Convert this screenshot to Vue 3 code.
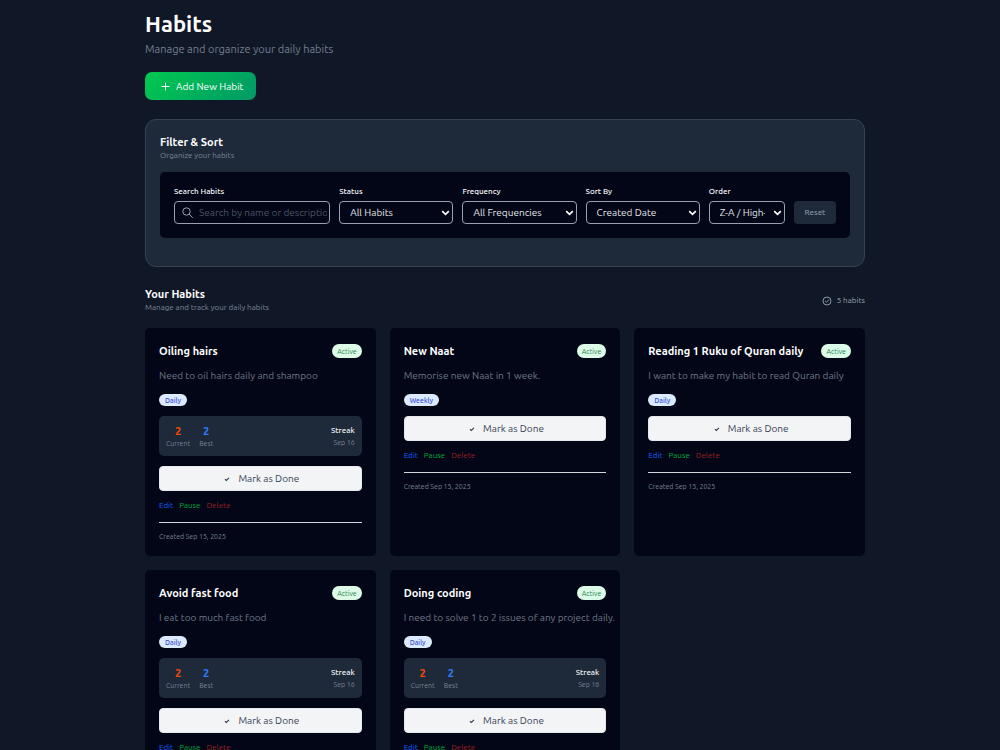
<script setup>
import { ref, computed } from 'vue'

const search = ref('')
const status = ref('All Habits')
const frequency = ref('All Frequencies')
const sortBy = ref('Created Date')
const order = ref('Z-A / High-Low')

const habits = ref([
  { id: 1, name: 'Oiling hairs', text: 'Need to oil hairs daily and shampoo', frequency: 'Daily', current: 2, best: 2, last: 'Sep 16' },
  { id: 2, name: 'New Naat', text: 'Memorise new Naat in 1 week.', frequency: 'Weekly' },
  { id: 3, name: 'Reading 1 Ruku of Quran daily', text: 'I want to make my habit to read Quran daily', frequency: 'Daily' },
  { id: 4, name: 'Avoid fast food', text: 'I eat too much fast food', frequency: 'Daily', current: 2, best: 2, last: 'Sep 16' },
  { id: 5, name: 'Doing coding', text: 'I need to solve 1 to 2 issues of any project daily.', frequency: 'Daily', current: 2, best: 2, last: 'Sep 16' }
])

const shown = computed(() =>
  habits.value.filter(h => h.name.toLowerCase().includes(search.value.toLowerCase()))
)
</script>

<template>
  <div class="page">
    <main class="container">
      <header>
        <h1>Habits</h1>
        <p class="lead">Manage and organize your daily habits</p>
        <button class="add" type="button">
          <svg width="9" height="9" viewBox="0 0 9 9" fill="none" stroke="currentColor" aria-hidden="true"><path d="M4.5 1v7M1 4.5h7" stroke-linecap="round" /></svg>
          Add New Habit
        </button>
      </header>

      <section class="filters">
        <h2>Filter &amp; Sort</h2>
        <p class="sub">Organize your habits</p>
        <form class="panel" @submit.prevent>
          <div class="field">
            <label for="search">Search Habits</label>
            <div class="search">
              <svg width="11" height="11" viewBox="0 0 11 11" fill="none" stroke="currentColor" aria-hidden="true"><circle cx="4.5" cy="4.5" r="3.7" /><path d="M7.3 7.3l3.2 3.2" stroke-linecap="round" /></svg>
              <input id="search" v-model="search" type="text" placeholder="Search by name or description..." />
            </div>
          </div>
          <div class="field">
            <label for="status">Status</label>
            <div class="select">
              <select id="status" v-model="status"><option>All Habits</option><option>Active</option><option>Paused</option></select>
              <svg width="9" height="6" viewBox="0 0 9 6" fill="none" stroke="currentColor" stroke-width="1.7" aria-hidden="true"><path d="M1.2 1.2l3.3 3.2 3.3-3.2" /></svg>
            </div>
          </div>
          <div class="field">
            <label for="frequency">Frequency</label>
            <div class="select">
              <select id="frequency" v-model="frequency"><option>All Frequencies</option><option>Daily</option><option>Weekly</option></select>
              <svg width="9" height="6" viewBox="0 0 9 6" fill="none" stroke="currentColor" stroke-width="1.7" aria-hidden="true"><path d="M1.2 1.2l3.3 3.2 3.3-3.2" /></svg>
            </div>
          </div>
          <div class="field">
            <label for="sort">Sort By</label>
            <div class="select">
              <select id="sort" v-model="sortBy"><option>Created Date</option><option>Name</option></select>
              <svg width="9" height="6" viewBox="0 0 9 6" fill="none" stroke="currentColor" stroke-width="1.7" aria-hidden="true"><path d="M1.2 1.2l3.3 3.2 3.3-3.2" /></svg>
            </div>
          </div>
          <div class="field">
            <label for="order">Order</label>
            <div class="select">
              <select id="order" v-model="order"><option>Z-A / High-Low</option><option>A-Z / Low-High</option></select>
              <svg width="9" height="6" viewBox="0 0 9 6" fill="none" stroke="currentColor" stroke-width="1.7" aria-hidden="true"><path d="M1.2 1.2l3.3 3.2 3.3-3.2" /></svg>
            </div>
          </div>
          <button class="reset" type="reset">Reset</button>
        </form>
      </section>

      <section class="list">
        <div class="list-head">
          <div>
            <h2>Your Habits</h2>
            <p class="sub">Manage and track your daily habits</p>
          </div>
          <p class="count">
            <svg width="10" height="10" viewBox="0 0 10 10" fill="none" stroke="currentColor" stroke-width="0.9" aria-hidden="true"><circle cx="5" cy="5" r="4" /><path d="M3.4 5.2l1.1 1.1 2.2-2.5" stroke-linecap="round" stroke-linejoin="round" /></svg>
            {{ habits.length }} habits
          </p>
        </div>

        <div class="grid">
          <article v-for="h in shown" :key="h.id" class="card">
            <div class="card-head">
              <h3>{{ h.name }}</h3>
              <span class="active">Active</span>
            </div>
            <p class="text">{{ h.text }}</p>
            <span class="freq">{{ h.frequency }}</span>
            <div v-if="h.current" class="streak">
              <div class="stat"><strong class="orange">{{ h.current }}</strong><span>Current</span></div>
              <div class="stat"><strong class="blue">{{ h.best }}</strong><span>Best</span></div>
              <div class="last"><b>Streak</b><span>{{ h.last }}</span></div>
            </div>
            <button class="done" type="button">
              <svg width="6" height="6" viewBox="0 0 6 6" fill="none" stroke="currentColor" stroke-width="1.2" aria-hidden="true"><path d="M1 3.3l1.3 1.2L5 1.8" /></svg>
              Mark as Done
            </button>
            <div class="actions">
              <button class="edit" type="button">Edit</button>
              <button class="pause" type="button">Pause</button>
              <button class="delete" type="button">Delete</button>
            </div>
            <p class="created">Created Sep 15, 2025</p>
          </article>
        </div>
      </section>
    </main>
  </div>
</template>

<style>
html {
  background: #101828;
  scrollbar-width: none;
}
body {
  margin: 0;
}
</style>

<style scoped>
.page {
  min-height: 100vh;
  padding: 9px 0 24px 10px;
  box-sizing: border-box;
  background: #101828;
  color: #f9fafb;
  font-family: Ubuntu, "Noto Sans", sans-serif;
  font-size: 10px;
}
.container {
  max-width: 720px;
  margin: 0 auto;
}
h1, h2, h3, p {
  margin: 0;
}
button, input, select {
  font: inherit;
  box-sizing: border-box;
}
button {
  cursor: pointer;
}
svg {
  flex: none;
}
h1 {
  font-size: 22px;
  line-height: 30px;
  font-weight: 600;
  color: #fff;
}
.lead {
  font-size: 11px;
  line-height: 20px;
  color: #747d8d;
}
.add {
  display: flex;
  align-items: center;
  gap: 6px;
  height: 28px;
  margin-top: 13px;
  padding: 0 12px 0 16px;
  border: 0;
  border-radius: 7px;
  background: linear-gradient(135deg, #00c950, #009966);
  color: #fff;
  font-size: 10px;
  font-weight: 400;
  white-space: nowrap;
}
h2 {
  font-size: 11px;
  line-height: 14px;
  font-weight: 600;
  color: #fff;
}
.sub {
  font-size: 8px;
  line-height: 14px;
  color: #7b8494;
}
.filters {
  margin-top: 19px;
  padding: 15px 14px 28px;
  border: 1px solid #364153;
  border-radius: 11px;
  background: #1e2939;
}
.panel {
  display: grid;
  grid-template-columns: 156fr 114fr 114fr 114fr 76fr 42fr;
  gap: 9px;
  align-items: end;
  margin-top: 9px;
  padding: 14px;
  border-radius: 5px;
  background: #020616;
}
.field {
  min-width: 0;
}
label {
  display: block;
  font-size: 8px;
  line-height: 12px;
  font-weight: 500;
  margin-bottom: 3px;
}
.search, .select {
  display: flex;
  align-items: center;
  height: 23px;
  box-sizing: border-box;
  border: 1px solid #99a1af;
  border-radius: 4px;
}
.search {
  gap: 6px;
  padding: 0 2px 0 7px;
  color: #99a1af;
}
.search input {
  flex: 1;
  min-width: 0;
  padding: 0;
  border: 0;
  outline: 0;
  background: transparent;
  color: #fff;
}
.search input::placeholder {
  color: #4a5565;
}
.select {
  position: relative;
}
.select select {
  width: 100%;
  height: 21px;
  padding: 0 19px 0 10px;
  border: 0;
  outline: 0;
  appearance: none;
  background: transparent;
  color: #e5e7eb;
}
.select option {
  background: #020616;
}
.select svg {
  position: absolute;
  right: 2px;
  top: 8px;
  color: #fff;
  pointer-events: none;
}
.reset {
  height: 23px;
  padding: 0;
  border: 0;
  border-radius: 4px;
  background: #1e2939;
  color: #8390a5;
  font-size: 8px;
  font-weight: 500;
}
.list {
  margin-top: 20px;
}
.list-head {
  display: flex;
  justify-content: space-between;
  align-items: center;
}
.count {
  display: flex;
  align-items: center;
  gap: 5px;
  font-size: 8px;
  line-height: 14px;
  color: #99a1af;
}
.grid {
  display: grid;
  grid-template-columns: repeat(3, minmax(0, 1fr));
  gap: 14px;
  margin-top: 13px;
}
.card {
  padding: 15px 14px 14px;
  border-radius: 5px;
  background: #020616;
}
.card-head {
  display: flex;
  align-items: center;
  justify-content: space-between;
  height: 16px;
}
h3 {
  font-size: 11px;
  line-height: 16px;
  font-weight: 600;
  color: #fff;
  white-space: nowrap;
}
.active {
  padding: 0 5px;
  border-radius: 7px;
  background: #dcfce7;
  color: #23804a;
  font-size: 7px;
  line-height: 14px;
}
.text {
  margin-top: 9px;
  line-height: 16px;
  font-size: 10px;
  color: #6f7888;
  white-space: nowrap;
}
.freq {
  display: block;
  width: fit-content;
  margin-top: 10px;
  padding: 0 6px;
  border-radius: 6px;
  background: #dbeafe;
  color: #3b51d8;
  font-size: 7px;
  line-height: 12px;
  font-weight: 500;
}
.streak {
  display: flex;
  align-items: center;
  gap: 9px;
  height: 40px;
  box-sizing: border-box;
  margin-top: 10px;
  padding: 0 7px;
  border-radius: 5px;
  background: #1e2939;
  font-size: 7px;
}
.stat span, .stat strong, .last span, .last b {
  display: block;
}
.stat {
  text-align: center;
  color: #7b8494;
  line-height: 11px;
}
.stat strong {
  font-size: 11px;
  line-height: 14px;
  font-weight: 700;
}
.stat .orange {
  color: #f54900;
}
.stat .blue {
  color: #2b7fff;
}
.last {
  margin-left: auto;
  text-align: right;
  color: #7b8494;
  line-height: 10px;
}
.last b {
  color: #f3f4f6;
  font-size: 8px;
  line-height: 12px;
  font-weight: 500;
}
.done {
  display: flex;
  align-items: center;
  justify-content: center;
  gap: 8px;
  width: 100%;
  height: 25px;
  margin-top: 10px;
  padding: 0 0 0 3px;
  border: 1px solid #e5e7eb;
  border-radius: 4px;
  background: #f3f4f6;
  color: #364153;
  font-size: 10px;
}
.actions {
  display: flex;
  gap: 6px;
  margin-top: 8px;
}
.actions button {
  padding: 0;
  border: 0;
  background: none;
  font-size: 8px;
  line-height: 14px;
}
.actions .edit {
  color: #155dfc;
}
.actions .pause {
  color: #00a63e;
}
.actions .delete {
  color: #9a2023;
}
.created {
  margin-top: 9px;
  padding-top: 7px;
  border-top: 1px solid #d1d5dc;
  font-size: 7px;
  line-height: 12px;
  color: #7b8494;
}
</style>
